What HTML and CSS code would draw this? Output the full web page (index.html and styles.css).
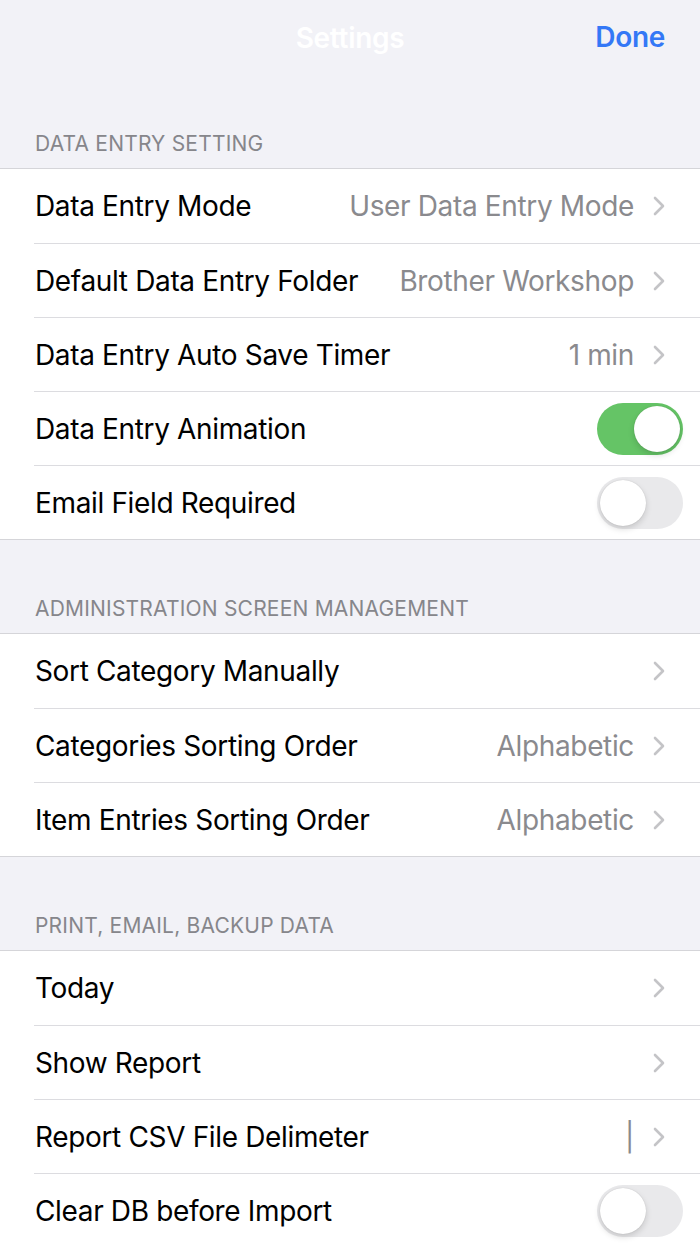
FILE: index.html
```html
<!DOCTYPE html>
<html lang="en">
<head>
    <meta charset="UTF-8">
    <meta name="viewport" content="width=device-width, initial-scale=1.0">
    <title>Settings</title>
    <link rel="stylesheet" href="styles.css">
</head>
<body>
    <div class="nav-bar">
        <span class="nav-title">Settings</span>
        <a class="nav-done" href="#">Done</a>
    </div>

    <div class="section-header">DATA ENTRY SETTING</div>
    <div class="group">
        <div class="row"><div class="row-inner">
            <span class="label">Data Entry Mode</span>
            <span class="value">User Data Entry Mode</span>
            <svg class="chevron" viewBox="0 0 12 20"><path d="M2 2l8 8-8 8"/></svg>
        </div></div>
        <div class="row"><div class="row-inner">
            <span class="label">Default Data Entry Folder</span>
            <span class="value">Brother Workshop</span>
            <svg class="chevron" viewBox="0 0 12 20"><path d="M2 2l8 8-8 8"/></svg>
        </div></div>
        <div class="row"><div class="row-inner">
            <span class="label">Data Entry Auto Save Timer</span>
            <span class="value">1 min</span>
            <svg class="chevron" viewBox="0 0 12 20"><path d="M2 2l8 8-8 8"/></svg>
        </div></div>
        <div class="row"><div class="row-inner">
            <span class="label">Data Entry Animation</span>
            <span class="switch on"><span class="knob"></span></span>
        </div></div>
        <div class="row"><div class="row-inner">
            <span class="label">Email Field Required</span>
            <span class="switch"><span class="knob"></span></span>
        </div></div>
    </div>

    <div class="section-header">ADMINISTRATION SCREEN MANAGEMENT</div>
    <div class="group">
        <div class="row"><div class="row-inner">
            <span class="label">Sort Category Manually</span>
            <svg class="chevron" viewBox="0 0 12 20"><path d="M2 2l8 8-8 8"/></svg>
        </div></div>
        <div class="row"><div class="row-inner">
            <span class="label">Categories Sorting Order</span>
            <span class="value">Alphabetic</span>
            <svg class="chevron" viewBox="0 0 12 20"><path d="M2 2l8 8-8 8"/></svg>
        </div></div>
        <div class="row"><div class="row-inner">
            <span class="label">Item Entries Sorting Order</span>
            <span class="value">Alphabetic</span>
            <svg class="chevron" viewBox="0 0 12 20"><path d="M2 2l8 8-8 8"/></svg>
        </div></div>
    </div>

    <div class="section-header">PRINT, EMAIL, BACKUP DATA</div>
    <div class="group">
        <div class="row"><div class="row-inner">
            <span class="label">Today</span>
            <svg class="chevron" viewBox="0 0 12 20"><path d="M2 2l8 8-8 8"/></svg>
        </div></div>
        <div class="row"><div class="row-inner">
            <span class="label">Show Report</span>
            <svg class="chevron" viewBox="0 0 12 20"><path d="M2 2l8 8-8 8"/></svg>
        </div></div>
        <div class="row"><div class="row-inner">
            <span class="label">Report CSV File Delimeter</span>
            <span class="value">|</span>
            <svg class="chevron" viewBox="0 0 12 20"><path d="M2 2l8 8-8 8"/></svg>
        </div></div>
        <div class="row"><div class="row-inner">
            <span class="label">Clear DB before Import</span>
            <span class="switch"><span class="knob"></span></span>
        </div></div>
    </div>
</body>
</html>
```

FILE: styles.css
```css
body {
    font-family: Inter, "Noto Sans", sans-serif;
    margin: 0;
    background-color: #f2f2f7;
    color: #000;
}
.nav-bar {
    position: relative;
    height: 75px;
    display: flex;
    align-items: center;
    justify-content: center;
}
.nav-title {
    color: #fff;
    font-size: 28px;
    font-weight: 600;
    letter-spacing: -0.3px;
}
.nav-done {
    position: absolute;
    right: 35px;
    top: 0;
    line-height: 75px;
    color: #3478f6;
    font-size: 28px;
    font-weight: 600;
    text-decoration: none;
    letter-spacing: -0.3px;
}
.section-header {
    height: 94px;
    box-sizing: border-box;
    padding: 0 0 12px 35px;
    display: flex;
    align-items: flex-end;
    font-size: 21px;
    color: #86868b;
    letter-spacing: 0.2px;
    border-bottom: 1px solid #d5d5d9;
}
.group {
    background-color: #fff;
    border-bottom: 1px solid #d5d5d9;
}
.row {
    padding-left: 34px;
}
.row + .row .row-inner {
    border-top: 1px solid #dcdce0;
}
.row-inner {
    height: 74px;
    box-sizing: border-box;
    display: flex;
    align-items: center;
    padding-right: 17px;
}
.label {
    flex: 1;
    padding-left: 1px;
    font-size: 28px;
    letter-spacing: -0.35px;
}
.value {
    font-size: 28px;
    letter-spacing: -0.35px;
    color: #8a8a8e;
    margin-right: 19px;
}
.chevron {
    width: 12px;
    height: 20px;
    margin-right: 18px;
    fill: none;
    stroke: #c4c4c7;
    stroke-width: 2.6;
    stroke-linecap: round;
    stroke-linejoin: round;
}
.switch {
    position: relative;
    width: 86px;
    height: 52px;
    border-radius: 26px;
    background-color: #e9e9eb;
}
.switch.on {
    background-color: #65c466;
}
.knob {
    position: absolute;
    top: 3px;
    left: 3px;
    width: 46px;
    height: 46px;
    border-radius: 50%;
    background-color: #fff;
    box-shadow: 0 3px 6px rgba(0, 0, 0, 0.15), 0 0 1px rgba(0, 0, 0, 0.2);
}
.switch.on .knob {
    left: 37px;
}
```
